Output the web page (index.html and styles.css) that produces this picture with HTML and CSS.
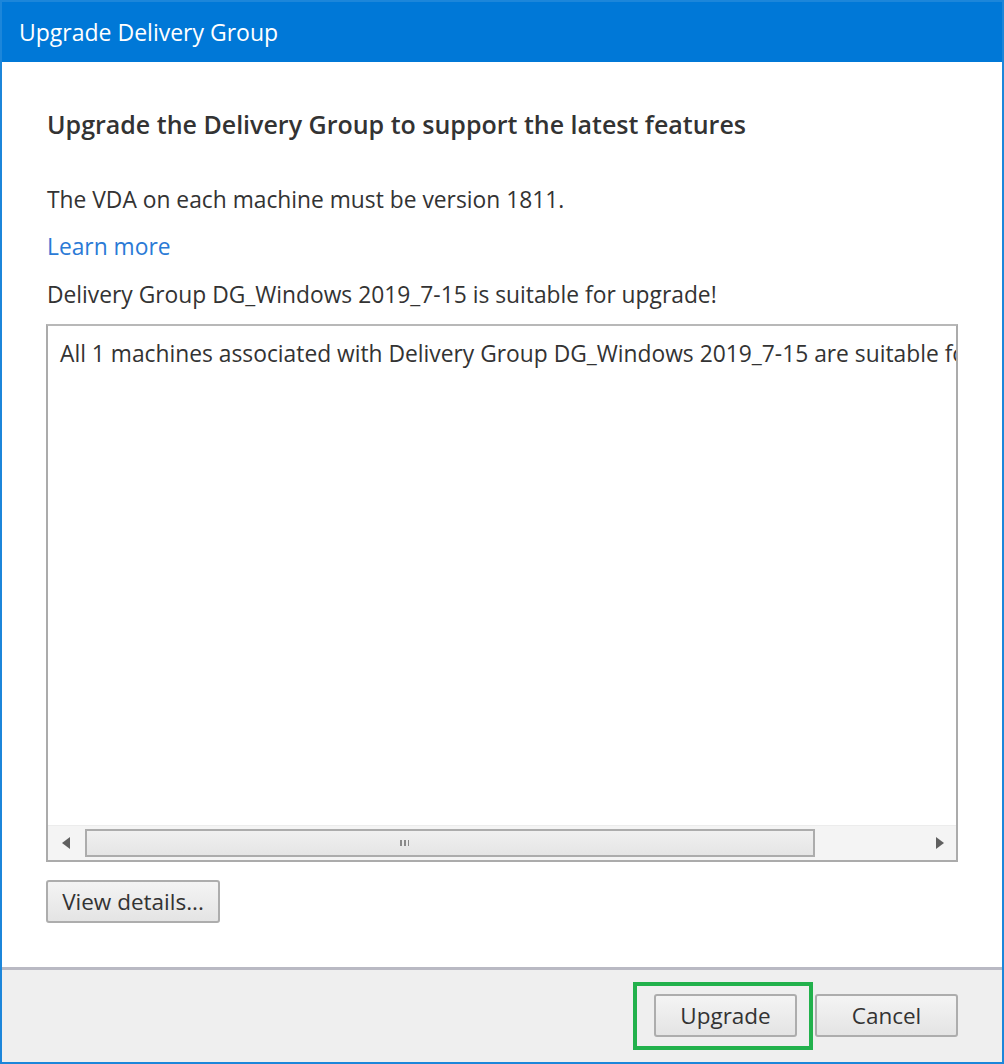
FILE: index.html
```html
<!DOCTYPE html>
<html lang="en">
<head>
    <meta charset="UTF-8">
    <title>Upgrade Delivery Group</title>
    <link rel="stylesheet" href="styles.css">
</head>
<body>

<div class="window">
    <div class="titlebar">Upgrade Delivery Group</div>

    <div class="content">
        <h1 class="heading">Upgrade the Delivery Group to support the latest features</h1>
        <p class="line">The VDA on each machine must be version 1811.</p>
        <a class="link" href="#">Learn more</a>
        <p class="line status">Delivery Group DG_Windows 2019_7-15 is suitable for upgrade!</p>

        <div class="listbox">
            <div class="listbox-text">All 1 machines associated with Delivery Group DG_Windows 2019_7-15 are suitable for upgrade.</div>
            <div class="hscroll">
                <span class="arrow arrow-left"></span>
                <div class="thumb"><span class="grip"></span></div>
                <span class="arrow arrow-right"></span>
            </div>
        </div>

        <button class="btn btn-details">View details...</button>
    </div>

    <div class="footer">
        <div class="btn-wrap">
            <button class="btn btn-footer">Upgrade</button>
            <div class="highlight"></div>
        </div>
        <button class="btn btn-footer">Cancel</button>
    </div>
</div>

</body>
</html>
```

FILE: styles.css
```css
body {
    margin: 0;
    padding: 0;
    background: #ffffff;
}

.window {
    width: 1004px;
    height: 1064px;
    box-sizing: border-box;
    border: 2px solid #1c86da;
    border-top: none;
    display: flex;
    flex-direction: column;
    font-family: "Open Sans", "Noto Sans", sans-serif;
    color: #333333;
}

.titlebar {
    height: 60px;
    border-top: 2px solid #1c86da;
    background: #0078d7;
    color: #ffffff;
    font-size: 23px;
    line-height: 60px;
    padding-left: 17px;
}

.content {
    flex: 1;
    padding: 0 44px 0 44px;
    display: flex;
    flex-direction: column;
    align-items: flex-start;
    background: #ffffff;
}

.heading {
    margin: 47px 0 0 1px;
    font-size: 25px;
    font-weight: 600;
    line-height: 30px;
    color: #333333;
}

.line {
    margin: 47px 0 0 1px;
    font-size: 22.8px;
    line-height: 28px;
}

.link {
    margin: 19px 0 0 1px;
    font-size: 22.8px;
    line-height: 28px;
    color: #2a7ad6;
    text-decoration: none;
}

.line.status {
    margin-top: 20px;
}

.listbox {
    margin-top: 15px;
    width: 912px;
    height: 538px;
    box-sizing: border-box;
    border: 2px solid #ababab;
    border-top-color: #b8b8b8;
    display: flex;
    flex-direction: column;
    overflow: hidden;
}

.listbox-text {
    flex: 1;
    padding: 14px 0 0 12px;
    font-size: 22.8px;
    line-height: 28px;
    white-space: nowrap;
    overflow: hidden;
}

.hscroll {
    height: 34px;
    background: #f4f4f4;
    border-top: 1px solid #ececec;
    display: flex;
    align-items: center;
}

.arrow {
    width: 0;
    height: 0;
    border-top: 6px solid transparent;
    border-bottom: 6px solid transparent;
}

.arrow-left {
    margin: 0 0 0 14px;
    border-right: 8px solid #606060;
}

.arrow-right {
    margin: 0 0 0 121px;
    border-left: 8px solid #606060;
}

.thumb {
    margin-left: 15px;
    width: 730px;
    height: 28px;
    box-sizing: border-box;
    border: 2px solid #acacac;
    background: linear-gradient(#f0f0f0, #e5e5e5);
    display: flex;
    align-items: center;
    justify-content: center;
}

.grip {
    width: 9px;
    height: 6px;
    background: repeating-linear-gradient(90deg, #8a8a8a 0, #8a8a8a 2px, transparent 2px, transparent 4px);
    margin-left: -92px;
}

.btn {
    font-family: "Open Sans", "Noto Sans", sans-serif;
    font-size: 22.5px;
    color: #333333;
    border: 2px solid #adadad;
    border-radius: 3px;
    background: linear-gradient(#f4f4f4, #e4e4e4);
    padding: 0;
}

.btn-details {
    margin-top: 18px;
    width: 174px;
    height: 43px;
}

.footer {
    height: 95px;
    border-top: 3px solid #b9b9c3;
    background: #efefef;
    display: flex;
    justify-content: flex-end;
    align-items: flex-start;
    padding: 24px 44px 0 0;
    box-sizing: border-box;
    gap: 18px;
}

.btn-footer {
    width: 143px;
    height: 43px;
    font-size: 22.5px;
}

.btn-wrap {
    position: relative;
}

.highlight {
    position: absolute;
    left: -21px;
    top: -12px;
    width: 180px;
    height: 68px;
    box-sizing: border-box;
    border: 4px solid #22b14c;
}
```
